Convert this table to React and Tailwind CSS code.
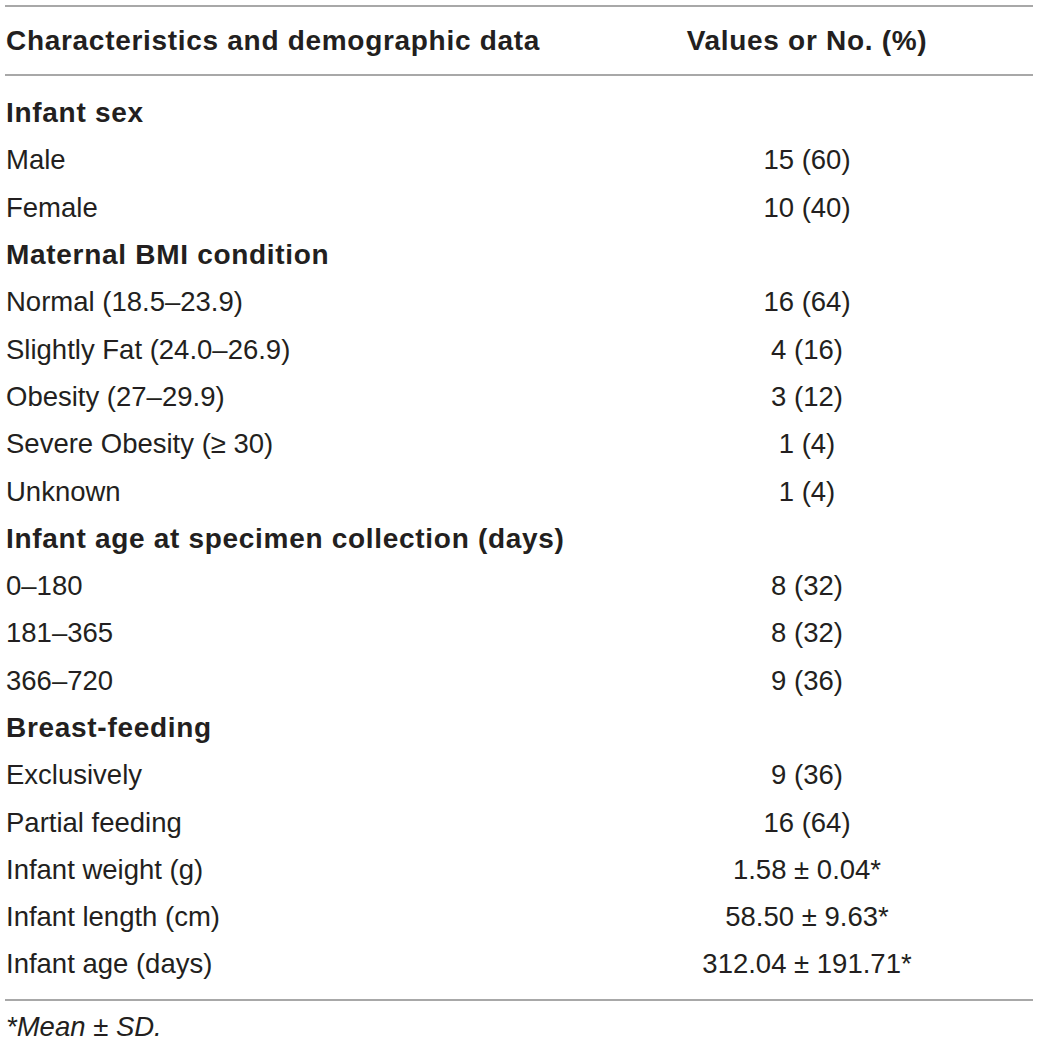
export default function App() {
  const rows = [
    { label: "Infant sex", bold: true },
    { label: "Male", value: "15 (60)" },
    { label: "Female", value: "10 (40)" },
    { label: "Maternal BMI condition", bold: true },
    { label: "Normal (18.5–23.9)", value: "16 (64)" },
    { label: "Slightly Fat (24.0–26.9)", value: "4 (16)" },
    { label: "Obesity (27–29.9)", value: "3 (12)" },
    { label: "Severe Obesity (≥ 30)", value: "1 (4)" },
    { label: "Unknown", value: "1 (4)" },
    { label: "Infant age at specimen collection (days)", bold: true },
    { label: "0–180", value: "8 (32)" },
    { label: "181–365", value: "8 (32)" },
    { label: "366–720", value: "9 (36)" },
    { label: "Breast-feeding", bold: true },
    { label: "Exclusively", value: "9 (36)" },
    { label: "Partial feeding", value: "16 (64)" },
    { label: "Infant weight (g)", value: "1.58 ± 0.04*" },
    { label: "Infant length (cm)", value: "58.50 ± 9.63*" },
    { label: "Infant age (days)", value: "312.04 ± 191.71*" },
  ];

  return (
    <div
      className="w-[1039px] h-[1043px] overflow-hidden bg-white text-[#231f20] text-[27.5px] leading-[1.2] pt-[5px] pl-[5px] pr-[6px]"
      style={{ fontFamily: '"Liberation Sans", Arial, sans-serif' }}
    >
      <div className="grid grid-cols-[576px_1fr] h-[71px] items-center border-y-2 border-[#a8a8a8] font-bold text-[28px] tracking-[0.7px]">
        <div className="pl-px">Characteristics and demographic data</div>
        <div className="text-center">Values or No. (%)</div>
      </div>

      <div className="pt-[13px] pb-[11px] border-b-2 border-[#a8a8a8]">
        {rows.map((row) => (
          <div
            key={row.label}
            className="grid grid-cols-[576px_1fr] h-[47.3px] items-center"
          >
            <div className={row.bold ? "pl-px font-bold text-[28px] tracking-[0.7px]" : "pl-px"}>
              {row.label}
            </div>
            <div className="text-center">{row.value}</div>
          </div>
        ))}
      </div>

      <div className="pt-[9px] pl-px">
        <span className="italic">*Mean</span> ± <span className="italic">SD.</span>
      </div>
    </div>
  );
}
